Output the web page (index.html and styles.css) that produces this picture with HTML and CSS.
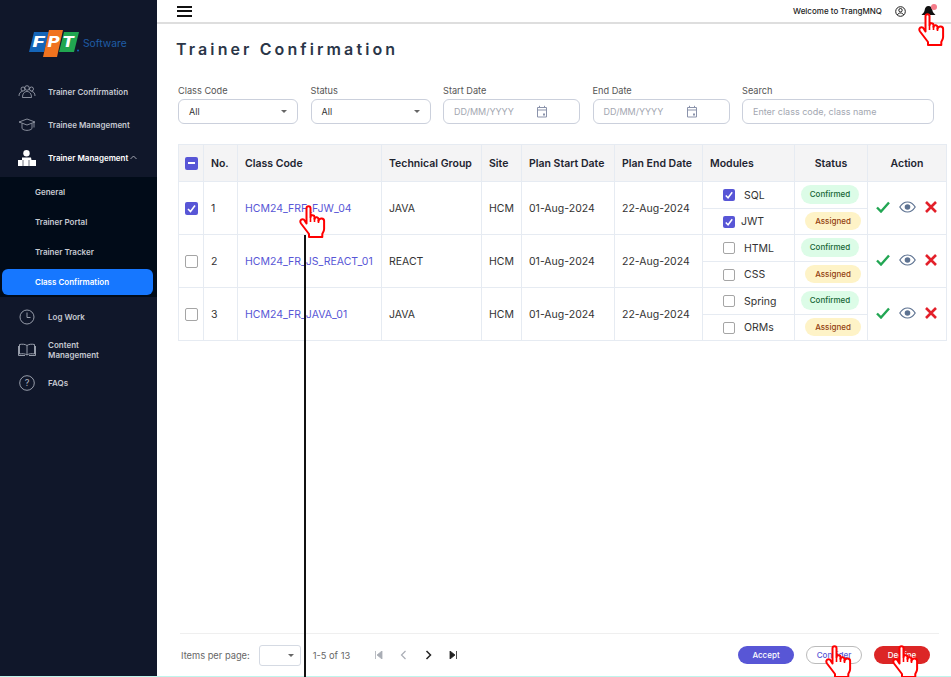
FILE: index.html
```html
<!DOCTYPE html>
<html lang="en">
  <head>
    <meta charset="UTF-8" />
    <title>Trainer Confirmation</title>
    <link rel="stylesheet" href="styles.css">
  </head>
  <body>
    <svg class="defs" width="0" height="0">
      <symbol id="hand" viewBox="0 0 27 33">
        <path d="M7.500 3.200a2 2 0 0 1 4 0V12a2 2 0 0 1 4 .6V14a2 2 0 0 1 4 .6V16a2 2 0 0 1 5.600.6V24c0 2.500-1.200 3.600-1.800 5v3H10v-3L2 18.500c-1.400-2-.5-4.200 1.500-4.200 1 0 2 .8 2.500 1.800l1.500 2.400z" fill="#fff" stroke="#f00" stroke-width="2" stroke-linejoin="round"/>
        <path d="M11.500 12v5M15.500 13v4M19.500 15v3" fill="none" stroke="#f00" stroke-width="1.600"/>
      </symbol>
      <symbol id="check" viewBox="0 0 14 12">
        <path d="M1 6.500l4 4 8-9" fill="none" stroke="#22a653" stroke-width="2.400"/>
      </symbol>
      <symbol id="eye" viewBox="0 0 17 12">
        <path d="M.8 6C3 2.500 5.500 1 8.500 1s5.500 1.500 7.700 5c-2.200 3.500-4.700 5-7.700 5S3 9.500.8 6z" fill="none" stroke="#5d7291" stroke-width="1.200"/>
        <circle cx="8.500" cy="6" r="2.800" fill="#5d7291"/>
      </symbol>
      <symbol id="cross" viewBox="0 0 12 12">
        <path d="M1 1l10 10M11 1L1 11" fill="none" stroke="#e3202a" stroke-width="2.600"/>
      </symbol>
      <symbol id="tick" viewBox="0 0 13 13">
        <path d="M3 7l2.500 2.500L10 3.500" fill="none" stroke="#fff" stroke-width="1.600"/>
      </symbol>
      <symbol id="calendar" viewBox="0 0 12 13">
        <path d="M1.500 2.500h9v9.500h-9zM1.500 5h9M3.500 .8v2M8.500 .8v2" fill="none" stroke="#8b93ab" stroke-width="1"/>
        <rect x="7" y="8.500" width="2" height="2" fill="#8b93ab"/>
      </symbol>
    </svg>

    <div class="app">
      <aside class="sidebar">
        <div class="logo">
          <svg width="50" height="27" viewBox="0 0 50 27">
            <polygon points="5,2 20,2 15,22 0,22" fill="#1565b8"/>
            <polygon points="20,0 34,0 28,27 14,27" fill="#f0731f"/>
            <polygon points="35,2 50,2 45,22 30,22" fill="#21a650"/>
            <circle cx="49" cy="20.500" r="1" fill="#1565b8"/>
            <text x="3.500" y="17" textLength="12" lengthAdjust="spacingAndGlyphs" class="logo-letter">F</text>
            <text x="18.500" y="17" textLength="12" lengthAdjust="spacingAndGlyphs" class="logo-letter">P</text>
            <text x="33" y="17" textLength="12" lengthAdjust="spacingAndGlyphs" class="logo-letter">T</text>
          </svg>
          <span class="logo-name">Software</span>
        </div>

        <nav class="nav">
          <a class="nav-item">
            <svg class="nav-icon" viewBox="0 0 18 14" fill="none" stroke="#a6abb8" stroke-width=".8">
              <circle cx="5" cy="4" r="2"/><circle cx="9" cy="3" r="2.300"/><circle cx="13.500" cy="4" r="2"/>
              <path d="M1 11c0-3 1.500-4.500 3.500-4.500M17 11c0-3-1.500-4.500-3.500-4.500M4.500 12.500c0-4 2-6 4.500-6s4.500 2 4.500 6z"/>
            </svg>
            <span>Trainer Confirmation</span>
          </a>
          <a class="nav-item">
            <svg class="nav-icon" viewBox="0 0 18 14" fill="none" stroke="#a6abb8" stroke-width=".8">
              <path d="M1 4l8-3 8 3-8 3zM4 5.500v5c2 2.500 8 2.500 10 0v-5M16 4.500v5"/>
            </svg>
            <span>Trainee Management</span>
          </a>
          <a class="nav-item nav-open">
            <svg class="nav-icon" viewBox="0 0 18 16" fill="#fff">
              <circle cx="8.500" cy="3.200" r="3.200"/>
              <path d="M4 7.500h9l.5 2.500H18v6H0v-6h4z"/>
              <path d="M5 10v6M11 10v6" stroke="#10172a" stroke-width=".6"/>
            </svg>
            <span>Trainer Management</span>
            <svg class="chevron" width="7" height="5" viewBox="0 0 7 5"><path d="M.5 4L3.500 1l3 3" fill="none" stroke="#c4c7cf" stroke-width=".8"/></svg>
          </a>
          <div class="subnav">
            <a class="sub-item">General</a>
            <a class="sub-item">Trainer Portal</a>
            <a class="sub-item">Trainer Tracker</a>
            <a class="sub-item sub-active">Class Confirmation</a>
          </div>
          <a class="nav-item">
            <svg class="nav-icon" viewBox="0 0 18 16" fill="none" stroke="#a6abb8" stroke-width=".9">
              <circle cx="9" cy="8" r="7"/><path d="M9 3.500V8.500h3.500"/>
            </svg>
            <span>Log Work</span>
          </a>
          <a class="nav-item">
            <svg class="nav-icon" viewBox="0 0 18 14" fill="none" stroke="#a6abb8" stroke-width=".9">
              <path d="M9 2.500C7 1 4 1 1.500 1.500V11C4 10.500 7 10.500 9 12c2-1.500 5-1.500 7.500-1V1.500C14 1 11 1 9 2.500zM9 2.500V12M.5 3v9.500H7M17.500 3v9.500H11"/>
            </svg>
            <span>Content<br>Management</span>
          </a>
          <a class="nav-item">
            <svg class="nav-icon" viewBox="0 0 18 16" fill="none" stroke="#a6abb8" stroke-width=".9">
              <circle cx="9" cy="8" r="7.300"/>
              <text x="9" y="11" class="help-mark">?</text>
            </svg>
            <span>FAQs</span>
          </a>
        </nav>
      </aside>

      <main class="main">
        <header class="topbar">
          <div class="burger"><i></i><i></i><i></i></div>
          <span class="welcome">Welcome to TrangMNQ</span>
          <svg class="user-icon" width="11" height="11" viewBox="0 0 11 11" fill="none" stroke="#1c1c1c" stroke-width="1">
            <circle cx="5.500" cy="5.500" r="4.800"/><circle cx="5.500" cy="4.200" r="1.700"/><path d="M2.400 9c.6-1.500 1.700-2 3.100-2s2.500.5 3.100 2"/>
          </svg>
          <span class="bell">
            <svg width="15" height="11" viewBox="0 0 15 11"><path d="M7.500 0c2.500 0 3.500 2 3.800 4 .3 2 1.700 3.500 3.200 5H.5C2 7.500 3.400 6 3.700 4 4 2 5 0 7.500 0zM6 9.500h3L7.500 11z" fill="#111"/></svg>
            <i class="bell-dot"></i>
          </span>
        </header>

        <section class="content">
          <h1 class="page-title">Trainer Confirmation</h1>

          <div class="filters">
            <div class="field">
              <label>Class Code</label>
              <div class="control"><span class="value">All</span><i class="caret"></i></div>
            </div>
            <div class="field">
              <label>Status</label>
              <div class="control"><span class="value">All</span><i class="caret"></i></div>
            </div>
            <div class="field">
              <label>Start Date</label>
              <div class="control"><span class="hint">DD/MM/YYYY</span><svg class="cal" width="12" height="13"><use href="#calendar"/></svg></div>
            </div>
            <div class="field">
              <label>End Date</label>
              <div class="control"><span class="hint">DD/MM/YYYY</span><svg class="cal" width="12" height="13"><use href="#calendar"/></svg></div>
            </div>
            <div class="field">
              <label>Search</label>
              <div class="control"><span class="hint">Enter class code, class name</span></div>
            </div>
          </div>

          <table class="grid">
            <colgroup>
              <col class="c-check"><col class="c-no"><col class="c-code"><col class="c-group"><col class="c-site">
              <col class="c-date"><col class="c-date2"><col class="c-mod"><col class="c-status"><col class="c-action">
            </colgroup>
            <thead>
              <tr>
                <th class="center"><span class="box box-on"><i class="dash"></i></span></th>
                <th>No.</th>
                <th>Class Code</th>
                <th>Technical Group</th>
                <th>Site</th>
                <th>Plan Start Date</th>
                <th>Plan End Date</th>
                <th>Modules</th>
                <th class="center">Status</th>
                <th class="center">Action</th>
              </tr>
            </thead>
            <tbody>
              <tr>
                <td rowspan="2" class="center"><span class="box box-on"><svg width="13" height="13"><use href="#tick"/></svg></span></td>
                <td rowspan="2">1</td>
                <td rowspan="2"><a class="code-link">HCM24_FRF_FJW_04</a></td>
                <td rowspan="2">JAVA</td>
                <td rowspan="2">HCM</td>
                <td rowspan="2">01-Aug-2024</td>
                <td rowspan="2">22-Aug-2024</td>
                <td class="mod"><span class="box box-on"><svg width="12" height="12"><use href="#tick"/></svg></span><span class="mod-name">SQL</span></td>
                <td class="stat"><span class="pill pill-ok">Confirmed</span></td>
                <td rowspan="2" class="actions"><svg class="a-check"><use href="#check"/></svg><svg class="a-eye"><use href="#eye"/></svg><svg class="a-cross"><use href="#cross"/></svg></td>
              </tr>
              <tr>
                <td class="mod"><span class="box box-on"><svg width="12" height="12"><use href="#tick"/></svg></span><span class="mod-name mod-tight">JWT</span></td>
                <td class="stat"><span class="pill pill-wait">Assigned</span></td>
              </tr>
              <tr>
                <td rowspan="2" class="center"><span class="box"></span></td>
                <td rowspan="2">2</td>
                <td rowspan="2"><a class="code-link">HCM24_FR_JS_REACT_01</a></td>
                <td rowspan="2">REACT</td>
                <td rowspan="2">HCM</td>
                <td rowspan="2">01-Aug-2024</td>
                <td rowspan="2">22-Aug-2024</td>
                <td class="mod"><span class="box"></span><span class="mod-name">HTML</span></td>
                <td class="stat"><span class="pill pill-ok">Confirmed</span></td>
                <td rowspan="2" class="actions"><svg class="a-check"><use href="#check"/></svg><svg class="a-eye"><use href="#eye"/></svg><svg class="a-cross"><use href="#cross"/></svg></td>
              </tr>
              <tr>
                <td class="mod"><span class="box"></span><span class="mod-name">CSS</span></td>
                <td class="stat"><span class="pill pill-wait">Assigned</span></td>
              </tr>
              <tr>
                <td rowspan="2" class="center"><span class="box"></span></td>
                <td rowspan="2">3</td>
                <td rowspan="2"><a class="code-link">HCM24_FR_JAVA_01</a></td>
                <td rowspan="2">JAVA</td>
                <td rowspan="2">HCM</td>
                <td rowspan="2">01-Aug-2024</td>
                <td rowspan="2">22-Aug-2024</td>
                <td class="mod"><span class="box"></span><span class="mod-name">Spring</span></td>
                <td class="stat"><span class="pill pill-ok">Confirmed</span></td>
                <td rowspan="2" class="actions"><svg class="a-check"><use href="#check"/></svg><svg class="a-eye"><use href="#eye"/></svg><svg class="a-cross"><use href="#cross"/></svg></td>
              </tr>
              <tr>
                <td class="mod"><span class="box"></span><span class="mod-name">ORMs</span></td>
                <td class="stat"><span class="pill pill-wait">Assigned</span></td>
              </tr>
            </tbody>
          </table>

          <footer class="pager">
            <span class="pager-label">Items per page:</span>
            <div class="page-size"><i class="caret"></i></div>
            <span class="pager-range">1-5 of 13</span>
            <div class="pager-icons">
              <svg width="9" height="8" viewBox="0 0 9 8"><path d="M1.500 0v8M8 0v8L3 4z" fill="#a9adb5" stroke="#a9adb5" stroke-width=".8"/></svg>
              <svg width="9" height="10" viewBox="0 0 9 10"><path d="M6.500 1L2.500 5l4 4" fill="none" stroke="#a9adb5" stroke-width="1.200"/></svg>
              <svg width="9" height="10" viewBox="0 0 9 10"><path d="M2.500 1l4 4-4 4" fill="none" stroke="#222" stroke-width="1.500"/></svg>
              <svg width="9" height="8" viewBox="0 0 9 8"><path d="M7.500 0v8M1 0v8l5-4z" fill="#222" stroke="#222" stroke-width=".8"/></svg>
            </div>
            <div class="pager-buttons">
              <button class="btn btn-accept">Accept</button>
              <button class="btn btn-consider">Consider</button>
              <button class="btn btn-decline">Decline</button>
            </div>
          </footer>
        </section>
      </main>
    </div>

    <!-- click annotations drawn over the screen -->
    <div class="flow-line"></div>
    <svg class="hand hand-link"><use href="#hand"/></svg>
    <svg class="hand hand-bell"><use href="#hand"/></svg>
    <svg class="hand hand-consider"><use href="#hand"/></svg>
    <svg class="hand hand-decline"><use href="#hand"/></svg>
  </body>
</html>
```

FILE: styles.css
```css
* {
  box-sizing: border-box;
}

html,
body {
  margin: 0;
  height: 100%;
  overflow: hidden;
}

body {
  position: relative;
  background: #bff5ec;
  font-family: Inter, "Liberation Sans", sans-serif;
  color: #2c2c2c;
}

.defs {
  position: absolute;
}

.app {
  display: flex;
  height: 676px;
}

/* sidebar */
.sidebar {
  width: 157px;
  flex: none;
  background: #10172a;
  color: #c6c9d1;
}

.logo {
  display: flex;
  align-items: flex-start;
  gap: 4px;
  height: 75px;
  padding: 30px 0 0 29px;
}

.logo-letter {
  font-size: 14px;
  font-weight: 800;
  font-style: italic;
  fill: #fff;
}

.logo-name {
  margin-top: 7px;
  font-size: 10.300px;
  color: #1f5da6;
}

.nav-item {
  display: flex;
  align-items: center;
  height: 33px;
  padding-left: 18px;
  font-size: 8px;
  font-weight: 600;
  line-height: 10px;
}

.nav-icon {
  width: 18px;
  height: 16px;
  margin-right: 12px;
  flex: none;
}

.help-mark {
  font-size: 9px;
  font-weight: 500;
  text-anchor: middle;
  fill: #a6abb8;
  stroke: none;
}

.nav-open {
  color: #fff;
}

.chevron {
  margin-left: 2px;
}

.subnav {
  display: flex;
  flex-direction: column;
  margin: 3px 0;
  background: #010b18;
}

.sub-item {
  display: flex;
  align-items: center;
  height: 30px;
  padding-left: 35px;
  font-size: 8px;
  font-weight: 600;
}

.sub-active {
  height: 26px;
  margin: 2px 4px 2px 2px;
  padding-left: 33px;
  background: #1677ff;
  border-radius: 6px;
  color: #fff;
}

/* top bar */
.main {
  flex: 1;
  display: flex;
  flex-direction: column;
  min-width: 0;
  background: #fff;
}

.topbar {
  display: flex;
  align-items: center;
  height: 24px;
  flex: none;
  padding: 0 15px 0 20px;
  background: #fff;
  border-bottom: 2px solid #dedede;
}

.burger {
  display: flex;
  flex-direction: column;
  gap: 2.500px;
  width: 15px;
  margin-right: auto;
}

.burger i {
  height: 2px;
  background: #111;
}

.welcome {
  font-size: 8px;
  font-weight: 500;
  color: #222;
}

.user-icon {
  margin-left: 13px;
}

.bell {
  position: relative;
  display: block;
  width: 15px;
  height: 11px;
  margin-left: 15px;
}

.bell svg {
  display: block;
}

.bell-dot {
  position: absolute;
  top: -2px;
  right: -1px;
  width: 6px;
  height: 6px;
  border-radius: 50%;
  background: #f47c8a;
}

/* page */
.content {
  flex: 1;
  display: flex;
  flex-direction: column;
  padding: 0 4px 0 21px;
  min-height: 0;
}

.page-title {
  margin: 16px 0 0 -2px;
  font-size: 16px;
  line-height: 19px;
  font-weight: 600;
  letter-spacing: 3.100px;
  color: #2b3648;
}

.filters {
  display: grid;
  grid-template-columns: 120px 120px 137px 137px 192px;
  column-gap: 12.500px;
  margin-top: 26px;
}

.field label {
  display: block;
  height: 14px;
  font-size: 9.200px;
  line-height: 11px;
  color: #555;
}

.control {
  display: flex;
  align-items: center;
  height: 25px;
  padding: 0 10px;
  border: 1px solid #cbd0dc;
  border-radius: 6px;
  background: #fff;
  font-size: 9px;
}

.value {
  color: #333;
  margin-right: auto;
}

.hint {
  color: #a3a7b1;
}

.cal {
  margin-left: auto;
  margin-right: 21px;
}

.caret {
  width: 0;
  height: 0;
  border-left: 3.500px solid transparent;
  border-right: 3.500px solid transparent;
  border-top: 3.500px solid #666;
}

/* table */
.grid {
  width: 768px;
  margin-top: 20px;
  border-collapse: collapse;
  table-layout: fixed;
  font-size: 10.500px;
  color: #333;
}

.c-check { width: 25px; }
.c-no { width: 34px; }
.c-code { width: 144px; }
.c-group { width: 100px; }
.c-site { width: 40px; }
.c-date { width: 93px; }
.c-date2 { width: 88px; }
.c-mod { width: 92px; }
.c-status { width: 73px; }
.c-action { width: 79px; }

.grid th,
.grid td {
  border: 1px solid #e6ebf2;
  padding: 0 0 0 7px;
  text-align: left;
}

.grid th {
  height: 37px;
  background: #f4f4f5;
  font-weight: 600;
  color: #1e2430;
}

.grid td {
  height: 26.500px;
  padding-left: 7px;
}

.grid .center {
  padding: 0;
  text-align: center;
}

.box {
  display: inline-block;
  width: 13px;
  height: 13px;
  border: 1px solid #a5a5a5;
  border-radius: 2px;
  background: #fff;
  vertical-align: middle;
}

.mod .box {
  width: 12px;
  height: 12px;
}

.box-on {
  position: relative;
  border: 0;
  background: #5856d6;
}

.box-on svg {
  display: block;
}

.dash {
  position: absolute;
  left: 3px;
  top: 5.500px;
  width: 7px;
  height: 2px;
  background: #fff;
}

.code-link {
  color: #5856d6;
}

.grid .mod {
  padding-left: 20px;
}

.mod-name {
  margin-left: 9px;
  vertical-align: middle;
}

.mod-tight {
  margin-left: 6px;
}

.grid .stat {
  padding: 0;
}

.pill {
  display: block;
  width: 58px;
  height: 19px;
  margin-left: 6px;
  border-radius: 10px;
  font-size: 8px;
  font-weight: 500;
  line-height: 19px;
  text-align: center;
}

.pill-ok {
  background: #dcfce7;
  color: #166534;
}

.pill-wait {
  width: 56px;
  height: 18px;
  margin-left: 10px;
  background: #fef3c7;
  color: #92400e;
  line-height: 18px;
}

.grid .actions {
  padding: 0 0 4px 8px;
  white-space: nowrap;
}

.actions svg {
  vertical-align: middle;
}

.a-check {
  width: 14px;
  height: 12px;
}

.a-eye {
  width: 17px;
  height: 12px;
  margin-left: 9px;
}

.a-cross {
  width: 12px;
  height: 12px;
  margin-left: 9px;
}

/* pager */
.pager {
  display: flex;
  align-items: center;
  height: 43px;
  margin-top: auto;
  margin-right: 8px;
  margin-left: 2px;
  border-top: 1px solid #efefef;
  font-size: 9.300px;
  color: #666;
}

.pager-label {
  margin-left: 1px;
}

.page-size {
  display: flex;
  align-items: center;
  justify-content: flex-end;
  width: 42px;
  height: 21px;
  margin-left: 9px;
  padding-right: 6px;
  border: 1px solid #d5dae3;
  border-radius: 3px;
}

.pager-range {
  margin-left: 12px;
}

.pager-icons {
  display: flex;
  align-items: center;
  gap: 16px;
  margin-left: 24px;
}

.pager-buttons {
  display: flex;
  gap: 12px;
  margin-left: auto;
  margin-right: 9px;
}

.btn {
  width: 56px;
  height: 18px;
  padding: 0;
  border: 1px solid transparent;
  border-radius: 9px;
  font: 500 8px Inter, "Liberation Sans", sans-serif;
}

.btn-accept {
  background: #5856d6;
  color: #fff;
}

.btn-consider {
  background: #fff;
  border-color: #bbb;
  color: #5856d6;
}

.btn-decline {
  background: #dc2626;
  color: #fff;
}

/* annotations */
.flow-line {
  position: absolute;
  left: 304px;
  top: 235px;
  width: 2px;
  height: 442px;
  background: #111;
}

.hand {
  position: absolute;
  width: 27px;
  height: 33px;
}

.hand-link {
  left: 299px;
  top: 205px;
}

.hand-bell {
  left: 918px;
  top: 13px;
}

.hand-consider {
  left: 825px;
  top: 645px;
}

.hand-decline {
  left: 892px;
  top: 645px;
}
```
